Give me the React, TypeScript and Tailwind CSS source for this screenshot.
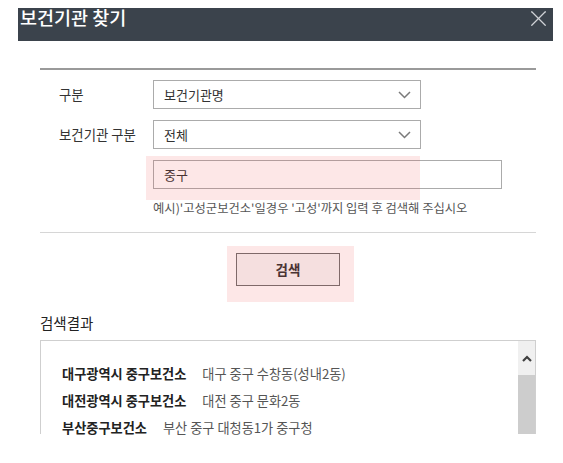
import { X } from "lucide-react"

const results = [
  { name: "대구광역시 중구보건소", addr: "대구 중구 수창동(성내2동)" },
  { name: "대전광역시 중구보건소", addr: "대전 중구 문화2동" },
  { name: "부산중구보건소", addr: "부산 중구 대청동1가 중구청" },
]

function Chevron() {
  return (
    <svg width="13" height="8" viewBox="0 0 13 8" fill="none">
      <polyline points="1,1 6.5,6.5 12,1" stroke="#7a7a7a" strokeWidth="1.5" />
    </svg>
  )
}

function SelectBox({ value }: { value: string }) {
  return (
    <div className="flex h-[29px] w-[268px] items-center justify-between border border-[#ababab] bg-white pl-[10px] pr-[9px] text-[13px] text-[#333]">
      <span>{value}</span>
      <Chevron />
    </div>
  )
}

export default function App() {
  return (
    <div
      className="relative h-[463px] w-[563px] overflow-hidden bg-white pt-[8px]"
      style={{ fontFamily: '"Noto Sans CJK KR", "Noto Sans", sans-serif' }}
    >
      <div className="ml-[18px] w-[535px]">
        <div className="flex h-[33px] items-start justify-between bg-[#3b434c]">
          <h1 className="pl-[2px] text-[18.5px] font-medium leading-[18px] text-white">보건기관 찾기</h1>
          <X className="-mt-[3px] mr-px h-[27px] w-[27px] text-[#cfd2d6]" strokeWidth={1.1} />
        </div>

        <div className="pl-[22px] pr-[17px]">
          <div className="mt-[27px] h-[2px] bg-[#9a9a9a]" />

          <div className="mt-[10px] flex items-center">
            <span className="w-[113px] pl-[19px] text-[13.4px] text-[#333]">구분</span>
            <SelectBox value="보건기관명" />
          </div>
          <div className="mt-[11px] flex items-center">
            <span className="w-[113px] pl-[19px] text-[13.4px] text-[#333]">보건기관 구분</span>
            <SelectBox value="전체" />
          </div>

          <div className="ml-[113px] mt-[11px] flex h-[29px] w-[349px] items-center border border-[#ababab] bg-white pl-[10px] text-[13px] text-[#333]">
            중구
          </div>
          <p className="ml-[113px] mt-[11px] text-[12.3px] leading-[16px] text-[#555]">
            예시)'고성군보건소'일경우 '고성'까지 입력 후 검색해 주십시오
          </p>

          <div className="mt-[16px] h-px bg-[#d6d6d6]" />

          <div className="mt-[20px] flex justify-center">
            <button className="h-[33px] w-[104px] border border-[#707070] bg-[#f6f6f6] text-[13.5px] font-bold text-[#333]">
              검색
            </button>
          </div>

          <h2 className="mt-[27px] text-[14.5px] leading-[20px] text-[#222]">검색결과</h2>

          <div className="mt-[7px] flex h-[94px] border border-b-0 border-[#cfcfcf]">
            <ul className="flex-1 pl-[21px] pt-[19px]">
              {results.map((r) => (
                <li key={r.name} className="flex h-[27px] items-center text-[13.2px]">
                  <span className="font-bold text-[#222]">{r.name}</span>
                  <span className="ml-[16px] text-[#555]">{r.addr}</span>
                </li>
              ))}
            </ul>
            <div className="flex w-[17px] flex-col">
              <div className="flex h-[34px] items-center justify-center bg-[#f0f0f0]">
                <svg width="10" height="7" viewBox="0 0 10 7" fill="none">
                  <polyline points="1,6 5,2 9,6" stroke="#404040" strokeWidth="2.2" />
                </svg>
              </div>
              <div className="flex-1 bg-[#cdcdcd]" />
            </div>
          </div>
        </div>
      </div>

      {/* highlight overlays */}
      <div className="pointer-events-none absolute left-[146px] top-[156px] h-[44px] w-[274px] bg-[rgba(240,60,60,0.12)]" />
      <div className="pointer-events-none absolute left-[227px] top-[246px] h-[56px] w-[127px] bg-[rgba(240,60,60,0.12)]" />
    </div>
  )
}
